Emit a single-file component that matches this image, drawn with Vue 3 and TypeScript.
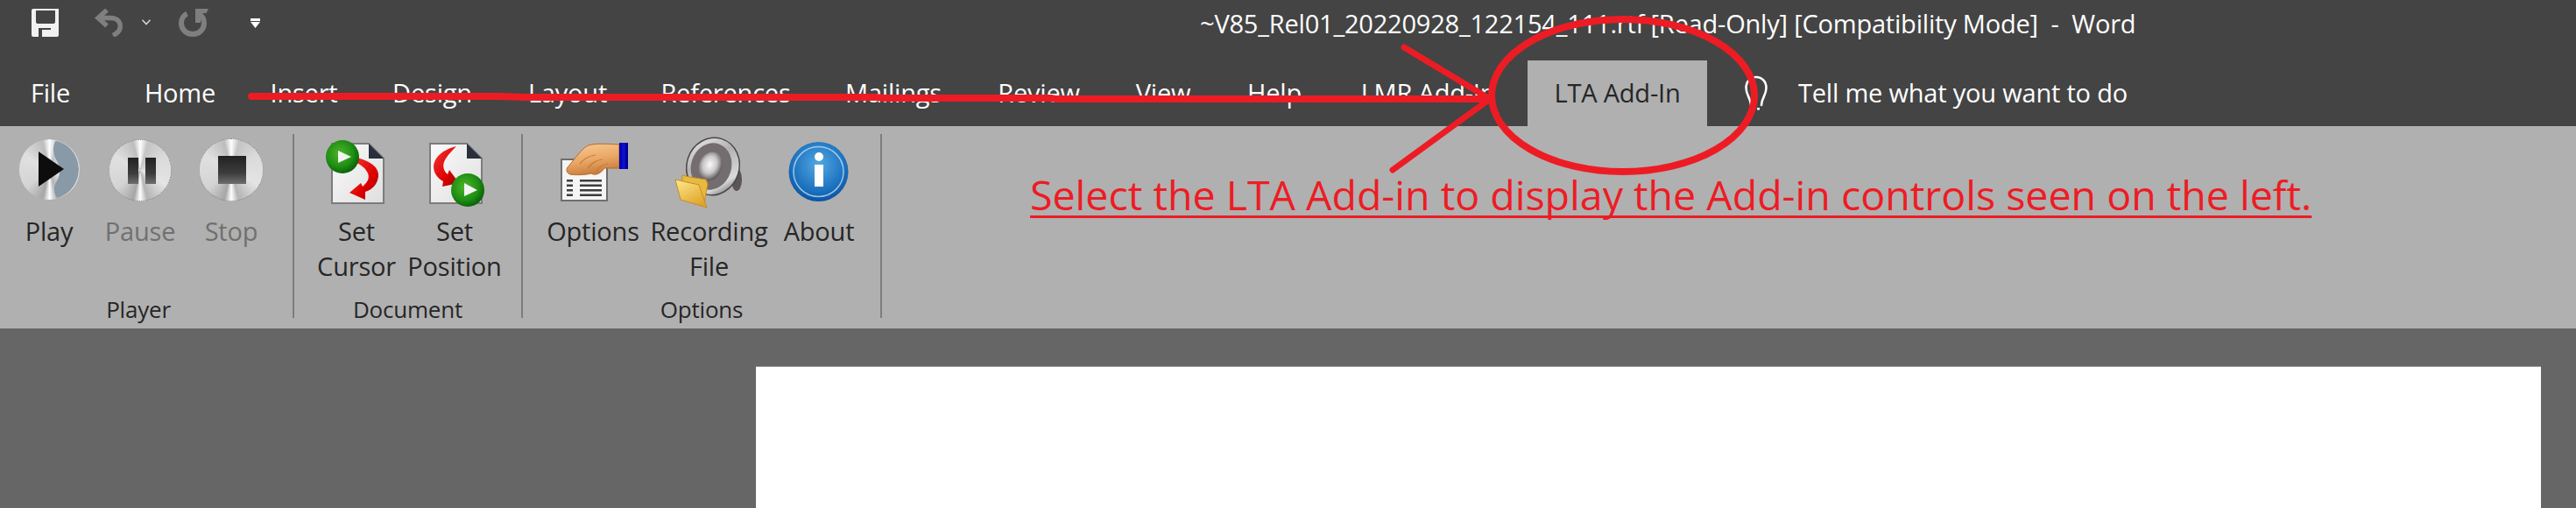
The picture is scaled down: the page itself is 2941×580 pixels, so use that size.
<script setup lang="ts">
const tabs: string[] = [
  'File', 'Home', 'Insert', 'Design', 'Layout', 'References',
  'Mailings', 'Review', 'View', 'Help', 'LMR Add-In',
]
</script>

<template>
  <div class="word">
    <svg class="defs" width="0" height="0" aria-hidden="true">
      <defs>
        <filter id="soft" x="-10%" y="-10%" width="120%" height="120%"><feGaussianBlur stdDeviation="0.7" /></filter>
        <linearGradient id="barFade" x1="0" y1="0" x2="0" y2="1">
          <stop offset="0" stop-color="#222" /><stop offset="0.6" stop-color="#3c3c3c" /><stop offset="1" stop-color="#6e6e6e" />
        </linearGradient>
        <radialGradient id="green" cx="0.42" cy="0.4" r="0.62">
          <stop offset="0" stop-color="#4fb52a" /><stop offset="0.65" stop-color="#1f8f14" /><stop offset="1" stop-color="#0a5f0a" />
        </radialGradient>
        <linearGradient id="red" x1="0" y1="0" x2="1" y2="1">
          <stop offset="0" stop-color="#f23b3b" /><stop offset="0.6" stop-color="#e00000" /><stop offset="1" stop-color="#8f0606" />
        </linearGradient>
        <linearGradient id="paper" x1="0" y1="0" x2="1" y2="1">
          <stop offset="0" stop-color="#fafafa" /><stop offset="1" stop-color="#dfdfdf" />
        </linearGradient>
        <linearGradient id="skin" x1="0" y1="0" x2="0.3" y2="1">
          <stop offset="0" stop-color="#f7cd9a" /><stop offset="0.6" stop-color="#eaa765" /><stop offset="1" stop-color="#c9803f" />
        </linearGradient>
        <linearGradient id="cuff" x1="0" y1="0" x2="1" y2="0">
          <stop offset="0" stop-color="#0000a8" /><stop offset="0.5" stop-color="#0b0bd0" /><stop offset="1" stop-color="#00008a" />
        </linearGradient>
        <linearGradient id="horn" x1="0" y1="0" x2="1" y2="1">
          <stop offset="0" stop-color="#f2f2f2" /><stop offset="0.4" stop-color="#b5b1b2" /><stop offset="0.75" stop-color="#dadada" /><stop offset="1" stop-color="#3d393a" />
        </linearGradient>
        <radialGradient id="cone" cx="0.45" cy="0.45" r="0.55">
          <stop offset="0" stop-color="#fbfbfb" /><stop offset="0.55" stop-color="#c9c6c7" /><stop offset="1" stop-color="#5d585a" />
        </radialGradient>
        <linearGradient id="folder" x1="0" y1="0" x2="0.6" y2="1">
          <stop offset="0" stop-color="#ffe98c" /><stop offset="1" stop-color="#dfa52b" />
        </linearGradient>
        <radialGradient id="info" cx="0.5" cy="0.38" r="0.65">
          <stop offset="0" stop-color="#54a9e2" /><stop offset="0.7" stop-color="#1b70bd" /><stop offset="1" stop-color="#0a4e9b" />
        </radialGradient>
      </defs>
    </svg>

    <header class="titlebar">
      <div class="quick">
        <svg class="qa-save" width="31" height="32" viewBox="36 10 31 32">
          <path fill="#f1f1f1" fill-rule="evenodd" d="M38 10h29v30a2 2 0 0 1-2 2H38a2 2 0 0 1-2-2V12a2 2 0 0 1 2-2ZM41 12v13a2 2 0 0 0 2 2h18a2 2 0 0 0 2-2V12ZM44 32v10h14V32Z" />
          <rect x="48" y="34" width="10" height="8" fill="#f1f1f1" />
        </svg>
        <svg class="qa-undo" width="32" height="32" viewBox="108 10 32 32">
          <path fill="none" stroke="#7f7f7f" stroke-width="5.500" d="M122 11.500 112 20.500 122 29.500M112 20.500H126C135 20.500 138 26 137 32 136.400 36 133 38.500 129 40.500" />
        </svg>
        <svg class="qa-chevron" width="10" height="7" viewBox="0 0 10 7">
          <path fill="none" stroke="#d8d8d8" stroke-width="1.500" d="M.5.8 5 5.600 9.500.8" />
        </svg>
        <svg class="qa-redo" width="34" height="32" viewBox="204 10 34 32">
          <path fill="none" stroke="#7f7f7f" stroke-width="6" d="M213.500 15.600C208.500 18 207 22.500 207 26.500 207 33.700 212.800 39 220 39S233 33.700 233 26.500C233 21.800 231 18 226.500 15" />
          <path fill="#7f7f7f" d="M223 10h15l-2.500 5H229v11h-6Z" />
        </svg>
        <svg class="qa-more" width="11" height="11" viewBox="0 0 11 11">
          <path fill="#fff" d="M0 0h11v3H0ZM0 4h11L5.500 11Z" />
        </svg>
      </div>
      <div class="title">~V85_Rel01_20220928_122154_111.rtf [Read-Only] [Compatibility Mode]&nbsp; -&nbsp; Word</div>
    </header>

    <nav class="tabs">
      <span v-for="tab in tabs" :key="tab" class="tab">{{ tab }}</span>
      <span class="tab tab--active">LTA Add-In</span>
      <div class="tell">
        <svg width="28" height="40" viewBox="1991 86 28 40">
          <path fill="none" stroke="#fff" stroke-width="2.600" stroke-linecap="round" d="M1999 120C1999 112 1993.500 109 1993.500 100.500 1993.500 93 1998.500 88 2005 88S2016.500 93 2016.500 100.500C2016.500 109 2011 112 2011 120" />
          <rect x="2006" y="123" width="3" height="2.500" fill="#fff" />
        </svg>
        <span>Tell me what you want to do</span>
      </div>
    </nav>

    <div class="ribbon">
      <section class="group group--player">
        <div class="buttons">
          <div class="btn">
            <div class="icon-box">
              <div class="disc disc--play">
                <svg width="69" height="69" viewBox="21 159 69 69">
                  <path fill="#8899a7" filter="url(#soft)" d="M64 160C78 162 90 176 90 193.500 90 211 78 225 66 227 61 221 61 214 64 208 70 199 69 190 64 182 60 174 60 166 64 160Z" />
                  <path fill="#0c0c0e" filter="url(#soft)" d="M44 173 73 193 44 213Z" />
                </svg>
              </div>
            </div>
            <span class="btn-label">Play</span>
          </div>
          <div class="btn btn--off">
            <div class="icon-box">
              <div class="disc disc--pause">
                <svg width="72" height="71" viewBox="123 159 72 71">
                  <g fill="url(#barFade)" filter="url(#soft)">
                    <rect x="145" y="180" width="12" height="30" />
                    <rect x="165" y="180" width="12" height="30" />
                  </g>
                </svg>
              </div>
            </div>
            <span class="btn-label">Pause</span>
          </div>
          <div class="btn btn--off">
            <div class="icon-box">
              <div class="disc disc--stop">
                <svg width="74" height="72" viewBox="227 158 74 72">
                  <rect x="249" y="178" width="32" height="32" fill="url(#barFade)" filter="url(#soft)" />
                </svg>
              </div>
            </div>
            <span class="btn-label">Stop</span>
          </div>
        </div>
        <div class="group-label">Player</div>
      </section>

      <section class="group group--document">
        <div class="buttons">
          <div class="btn">
            <div class="icon-box">
              <svg width="82" height="91" viewBox="366 153 82 91">
                <g filter="url(#soft)">
                  <path fill="url(#paper)" stroke="#7b7b7b" stroke-width="2" d="M379 164H421L438 181V232H379Z" />
                  <path fill="#2b2f3c" d="M421 164 438 181H421Z" />
                  <path fill="url(#red)" d="M407 180C420 183 433 190 432 201 431 210 426 216 417 219L417 228 399 220 412 209 414 213C420 208 423 202 419 196 416 191 412 188 407 186Z" />
                  <circle cx="391" cy="179" r="19" fill="url(#green)" />
                  <path fill="#f4f4f4" d="M386 172 401 179 386 186Z" />
                </g>
              </svg>
            </div>
            <span class="btn-label">Set<br>Cursor</span>
          </div>
          <div class="btn">
            <div class="icon-box">
              <svg width="82" height="91" viewBox="478 153 82 91">
                <g filter="url(#soft)">
                  <path fill="url(#paper)" stroke="#7b7b7b" stroke-width="2" d="M491 164H533L550 181V232H491Z" />
                  <path fill="#2b2f3c" d="M533 164 550 181H533Z" />
                  <path fill="url(#red)" d="M521 167C508 170 496 178 495 190 495 197 499 203 506 207L505 213 524 209 513 194 511 199C505 194 505 187 509 181 512 176 517 171 521 167Z" />
                  <circle cx="534" cy="217" r="19" fill="url(#green)" />
                  <path fill="#f4f4f4" d="M530 209 545 217 530 224Z" />
                </g>
              </svg>
            </div>
            <span class="btn-label">Set<br>Position</span>
          </div>
        </div>
        <div class="group-label">Document</div>
      </section>

      <section class="group group--options">
        <div class="buttons">
          <div class="btn">
            <div class="icon-box">
              <svg width="80" height="91" viewBox="637 153 80 91">
                <g filter="url(#soft)">
                  <rect x="641" y="182" width="52" height="47" fill="#f5f5f5" stroke="#6e6e6e" stroke-width="2" />
                  <g fill="#3c3c3c">
                    <rect x="647" y="205" width="7" height="2.500" />
                    <rect x="647" y="210.500" width="7" height="2.500" />
                    <rect x="647" y="216" width="7" height="2.500" />
                    <rect x="647" y="221.500" width="7" height="2.500" />
                    <rect x="662" y="205" width="25" height="2.500" />
                    <rect x="662" y="210.500" width="25" height="2.500" />
                    <rect x="662" y="216" width="25" height="2.500" />
                    <rect x="662" y="221.500" width="25" height="2.500" />
                  </g>
                  <path fill="url(#skin)" stroke="#b9682c" stroke-width="1" d="M648 191C655 183 660 175 668 168 674 163 690 164 707 165V192H690C686 198 680 201 675 198 668 200 655 200 651 199 647 198 646 194 648 191Z" />
                  <path fill="none" stroke="#c67a3a" stroke-width="1.200" d="M662 187C667 181 672 178 680 177M671 192C676 186 680 183 688 182M680 197C684 191 687 188 694 187" />
                  <rect x="707" y="163" width="10" height="30" fill="url(#cuff)" />
                </g>
              </svg>
            </div>
            <span class="btn-label">Options</span>
          </div>
          <div class="btn">
            <div class="icon-box">
              <svg width="85" height="91" viewBox="767 153 85 91">
                <g filter="url(#soft)">
                  <ellipse cx="841" cy="205" rx="6" ry="13" fill="#5a5556" />
                  <ellipse cx="814" cy="190" rx="30" ry="33" transform="rotate(18 814 190)" fill="url(#horn)" stroke="#4b4748" stroke-width="1.500" />
                  <ellipse cx="812" cy="190" rx="23" ry="27" transform="rotate(18 812 190)" fill="#736d6f" />
                  <ellipse cx="811" cy="190" rx="13" ry="17" transform="rotate(22 811 190)" fill="url(#cone)" />
                  <path fill="#e7b93f" stroke="#c48d20" stroke-width="1" d="M779 200 787 202 806 205 808 210 804 232 778 224Z" />
                  <path fill="url(#folder)" stroke="#c48d20" stroke-width="1" d="M771 205 798 211 807 237 777 228Z" />
                </g>
              </svg>
            </div>
            <span class="btn-label">Recording<br>File</span>
          </div>
          <div class="btn">
            <div class="icon-box">
              <svg width="70" height="91" viewBox="900 153 70 91">
                <g filter="url(#soft)">
                  <circle cx="934.500" cy="196" r="34" fill="url(#info)" />
                  <circle cx="934.500" cy="196" r="28.500" fill="none" stroke="#bcdcf3" stroke-width="1.500" opacity="0.8" />
                  <circle cx="935" cy="179" r="5" fill="#fff" />
                  <path fill="#fff" d="M930 188H940V213H930Z" />
                </g>
              </svg>
            </div>
            <span class="btn-label">About</span>
          </div>
        </div>
        <div class="group-label">Options</div>
      </section>

      <p class="note">Select the LTA Add-in to display the Add-in controls seen on the left.</p>
    </div>

    <main class="canvas">
      <div class="page"></div>
    </main>

    <!-- hand-drawn markup lying on top of the window -->
    <svg class="markup" width="2941" height="580" viewBox="0 0 2941 580" aria-hidden="true">
      <g fill="none" stroke="#ed1c24" stroke-linecap="round">
        <path stroke-width="8" d="M287 110H570L600 111H1000L1010 112H1200L1205 113H1698" />
        <path stroke-width="7" d="M1603 54 1701 113" />
        <path stroke-width="7" d="M1590 194 1701 113" />
        <ellipse cx="1853" cy="109" rx="150" ry="87" stroke-width="8" />
      </g>
    </svg>
  </div>
</template>

<style scoped>
.word {
  position: relative;
  width: 2941px;
  height: 580px;
  overflow: hidden;
  background: #666;
  font-family: "Open Sans", "Noto Sans", sans-serif;
  font-size: 29px;
  letter-spacing: -0.2px;
  color: #fff;
}

.defs {
  position: absolute;
}

.titlebar {
  display: flex;
  height: 69px;
  background: #444;
}

.quick {
  display: flex;
  align-items: flex-start;
  flex: 0 0 1370px;
  padding: 10px 0 0 36px;
  box-sizing: border-box;
}

.qa-undo { margin-left: 41px; }
.qa-chevron { margin: 12px 0 0 22px; }
.qa-redo { margin-left: 32px; }
.qa-more { margin: 11px 0 0 48px; }

.title {
  line-height: 54px;
  white-space: nowrap;
}

.tabs {
  display: grid;
  grid-template-columns: 115px 181px 102px 191px 118px 243px 140px 192px 92px 162px 189px 205px auto;
  height: 75px;
  background: #444;
}

.tab {
  line-height: 74px;
  text-align: center;
  white-space: nowrap;
}

.tab--active {
  margin-left: 19px;
  width: 205px;
  background: #b0b0b0;
  color: #262626;
}

.tell {
  display: flex;
  align-items: flex-start;
  gap: 34px;
  margin-left: 61px;
  line-height: 74px;
  white-space: nowrap;
}

.tell svg {
  margin-top: 17px;
}

.ribbon {
  display: flex;
  align-items: flex-start;
  height: 231px;
  padding-top: 9px;
  box-sizing: border-box;
  background: #b0b0b0;
  color: #262626;
}

.group {
  display: flex;
  flex-direction: column;
  height: 210px;
  box-sizing: border-box;
  border-right: 2px solid #7d7d7d;
}

.group--player { width: 336px; padding-left: 4px; }
.group--document { width: 261px; padding-left: 15px; }
.group--options { width: 410px; padding-left: 14px; }

.buttons {
  display: grid;
  height: 177px;
}

.group--player .buttons { grid-template-columns: repeat(3, 104px); }
.group--document .buttons { grid-template-columns: repeat(2, 112px); }
.group--options .buttons { grid-template-columns: 132px 133px 118px; }

.btn {
  display: flex;
  flex-direction: column;
  align-items: center;
}

.icon-box {
  display: flex;
  justify-content: center;
  height: 91px;
}

.btn-label {
  line-height: 40px;
  text-align: center;
  white-space: nowrap;
}

.btn--off .btn-label {
  color: #707070;
}

.disc {
  box-sizing: border-box;
  border-radius: 50%;
  border: 1.5px dotted #7a7a7a;
  background: conic-gradient(#fff 0deg, #c4c4c4 16deg, #dadada 60deg, #e4e4e4 120deg, #b4b4b4 166deg, #fff 180deg, #a6a6a6 193deg, #d4d4d4 232deg, #e0e0e0 300deg, #bdbdbd 346deg, #fff 360deg);
  overflow: hidden;
}

.disc svg {
  display: block;
  margin: -1.5px;
}

.disc--play { width: 69px; height: 69px; margin-top: 6px; border-color: transparent; }
.disc--pause { width: 72px; height: 71px; margin-top: 6px; }
.disc--stop { width: 74px; height: 72px; margin-top: 5px; }

.group-label {
  height: 33px;
  line-height: 46px;
  font-size: 26px;
  text-align: center;
  white-space: nowrap;
}

.group--player .group-label { padding-right: 22px; }
.group--document .group-label { padding-right: 15px; }
.group--options .group-label { padding-right: 14px; }

.note {
  margin: 0 0 0 169px;
  padding-top: 29px;
  font-size: 46.500px;
  line-height: 80px;
  letter-spacing: 0;
  white-space: nowrap;
  color: #ed1c24;
  text-decoration: underline;
  text-decoration-thickness: 3px;
  text-underline-offset: 6px;
  text-decoration-skip-ink: none;
}

.canvas {
  height: 205px;
  padding: 43px 0 0 863px;
  box-sizing: border-box;
  background: #666;
}

.page {
  width: 2038px;
  height: 162px;
  box-sizing: border-box;
  border-top: 1px solid #9a9a9a;
  background: #fff;
}

.markup {
  position: absolute;
  inset: 0;
  pointer-events: none;
}
</style>

<style>
html, body {
  margin: 0;
  background: #666;
}
</style>
